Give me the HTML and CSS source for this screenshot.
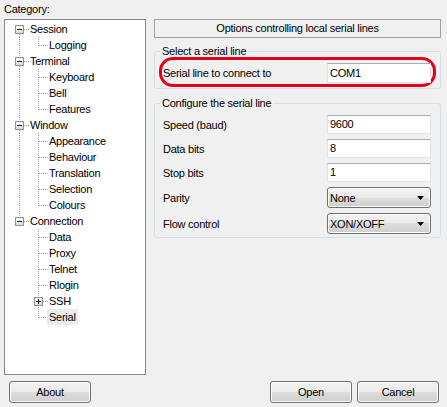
FILE: index.html
```html
<!DOCTYPE html>
<html>
<head>
<meta charset="utf-8">
<link rel="stylesheet" href="styles.css">
</head>
<body>
<div class="dialog">
  <div class="main">
    <div class="left">
      <div class="cat-label">Category:</div>
      <div class="tree">
        <div class="row l0 t-first"><span class="exp minus"></span><span class="lbl">Session</span></div>
        <div class="row l1 t-cont-last"><span class="lbl">Logging</span></div>
        <div class="row l0 t-mid"><span class="exp minus"></span><span class="lbl">Terminal</span></div>
        <div class="row l1 t-cont"><span class="lbl">Keyboard</span></div>
        <div class="row l1 t-cont"><span class="lbl">Bell</span></div>
        <div class="row l1 t-cont-last"><span class="lbl">Features</span></div>
        <div class="row l0 t-mid"><span class="exp minus"></span><span class="lbl">Window</span></div>
        <div class="row l1 t-cont"><span class="lbl">Appearance</span></div>
        <div class="row l1 t-cont"><span class="lbl">Behaviour</span></div>
        <div class="row l1 t-cont"><span class="lbl">Translation</span></div>
        <div class="row l1 t-cont"><span class="lbl">Selection</span></div>
        <div class="row l1 t-cont-last"><span class="lbl">Colours</span></div>
        <div class="row l0 t-last"><span class="exp minus"></span><span class="lbl">Connection</span></div>
        <div class="row l1 t-end"><span class="lbl">Data</span></div>
        <div class="row l1 t-end"><span class="lbl">Proxy</span></div>
        <div class="row l1 t-end"><span class="lbl">Telnet</span></div>
        <div class="row l1 t-end"><span class="lbl">Rlogin</span></div>
        <div class="row l1x t-end-exp"><span class="exp plus"></span><span class="lbl">SSH</span></div>
        <div class="row l1 t-end-last"><span class="lbl sel">Serial</span></div>
      </div>
    </div>
    <div class="right">
      <div class="panel-title">Options controlling local serial lines</div>
      <fieldset class="group g1">
        <legend>Select a serial line</legend>
        <div class="field highlight">
          <span class="flabel">Serial line to connect to</span>
          <span class="input">COM1</span>
        </div>
      </fieldset>
      <fieldset class="group g2">
        <legend>Configure the serial line</legend>
        <div class="field"><span class="flabel">Speed (baud)</span><span class="input">9600</span></div>
        <div class="field"><span class="flabel">Data bits</span><span class="input">8</span></div>
        <div class="field"><span class="flabel">Stop bits</span><span class="input">1</span></div>
        <div class="field"><span class="flabel">Parity</span><span class="select"><span class="val">None</span><svg class="arrow" width="7" height="4" viewBox="0 0 7 4"><polygon points="0,0 7,0 3.5,4" fill="#000"/></svg></span></div>
        <div class="field"><span class="flabel">Flow control</span><span class="select"><span class="val">XON/XOFF</span><svg class="arrow" width="7" height="4" viewBox="0 0 7 4"><polygon points="0,0 7,0 3.5,4" fill="#000"/></svg></span></div>
      </fieldset>
    </div>
  </div>
  <div class="buttons">
    <span class="btn">About</span>
    <span class="spacer"></span>
    <span class="btn">Open</span>
    <span class="btn">Cancel</span>
  </div>
</div>
</body>
</html>
```

FILE: styles.css
```css
html, body {
  margin: 0;
  padding: 0;
}
body {
  width: 447px;
  height: 407px;
  overflow: hidden;
  background: #f0f0f0;
  font-family: "Liberation Sans", Arial, sans-serif;
  font-size: 11px;
  letter-spacing: -0.25px;
  color: #000;
}
.dialog {
  display: flex;
  flex-direction: column;
}
.main {
  display: grid;
  grid-template-columns: 142px 287px;
  column-gap: 8px;
  padding-left: 4px;
}
.cat-label {
  line-height: 13px;
  margin: 3px 0 3px 0;
}
.tree {
  box-sizing: border-box;
  height: 356px;
  border: 1px solid #828790;
  background: #fff;
  padding-top: 1px;
  --vd: repeating-linear-gradient(to bottom, #a0a0a0 0 1px, transparent 1px 2px);
  --hd: repeating-linear-gradient(to right, #a0a0a0 0 1px, transparent 1px 2px);
}
.row {
  height: 16px;
  line-height: 16px;
  display: flex;
  align-items: flex-start;
  white-space: nowrap;
  background-repeat: no-repeat;
}
.l0 { padding-left: 10px; }
.l1 { padding-left: 42px; }
.l1x { padding-left: 29px; }
.lbl { padding: 0 2px; }
.l0 .lbl { margin-left: 4px; }
.l1x .lbl { margin-left: 4px; }
.lbl.sel { background: #ececec; }

.exp {
  box-sizing: border-box;
  width: 9px;
  height: 9px;
  margin-top: 4px;
  border: 1px solid #8f8f8f;
  background-color: #f4f4f4;
  background-repeat: no-repeat;
}
.exp.minus {
  background-image: linear-gradient(#1b1b1b, #1b1b1b), linear-gradient(#fff, #dcdcdc);
  background-size: 5px 1px, 100% 100%;
  background-position: 1px 3px, 0 0;
}
.exp.plus {
  background-image: linear-gradient(#1b1b1b, #1b1b1b), linear-gradient(#1b1b1b, #1b1b1b), linear-gradient(#fff, #dcdcdc);
  background-size: 5px 1px, 1px 5px, 100% 100%;
  background-position: 1px 3px, 3px 1px, 0 0;
}

/* tree connector lines */
.t-first {
  background-image: var(--hd), var(--vd);
  background-size: 5px 1px, 1px 3px;
  background-position: 19px 8px, 14px 13px;
}
.t-mid {
  background-image: var(--hd), var(--vd), var(--vd);
  background-size: 5px 1px, 1px 4px, 1px 3px;
  background-position: 19px 8px, 14px 0, 14px 13px;
}
.t-last {
  background-image: var(--hd), var(--vd);
  background-size: 5px 1px, 1px 4px;
  background-position: 19px 8px, 14px 0;
}
.t-cont {
  background-image: var(--vd), var(--vd), var(--hd);
  background-size: 1px 16px, 1px 16px, 9px 1px;
  background-position: 14px 0, 33px 0, 34px 8px;
}
.t-cont-last {
  background-image: var(--vd), var(--vd), var(--hd);
  background-size: 1px 16px, 1px 9px, 9px 1px;
  background-position: 14px 0, 33px 0, 34px 8px;
}
.t-end {
  background-image: var(--vd), var(--hd);
  background-size: 1px 16px, 9px 1px;
  background-position: 33px 0, 34px 8px;
}
.t-end-exp {
  background-image: var(--vd), var(--hd);
  background-size: 1px 16px, 5px 1px;
  background-position: 33px 0, 38px 8px;
}
.t-end-last {
  background-image: var(--vd), var(--hd);
  background-size: 1px 9px, 9px 1px;
  background-position: 33px 0, 34px 8px;
}

.right {
  padding-top: 19px;
  display: flex;
  flex-direction: column;
}
.panel-title {
  box-sizing: border-box;
  height: 19px;
  line-height: 17px;
  border: 1px solid #a0a0a0;
  text-align: center;
}
.group {
  margin: 0;
  border: 1px solid #d5dfe5;
  border-radius: 3px;
  min-width: 0;
}
.group legend {
  padding: 0 2px;
  line-height: 13px;
}
.g1 {
  margin-top: 7px;
  padding: 0 4px 1px 4px;
}
.g1 legend { margin-left: 1px; }
.g2 {
  margin-top: 8px;
  padding: 5px 9px 3px 8px;
  display: flex;
  flex-direction: column;
  gap: 5px;
}
.g2 legend { margin-left: -3px; }
.field {
  display: flex;
  align-items: center;
  justify-content: space-between;
}
.highlight {
  box-sizing: border-box;
  height: 30px;
  margin-top: -1px;
  border: 3px solid #e3001b;
  border-radius: 14px;
  padding: 1px 2px 0 1px;
}
.input {
  box-sizing: border-box;
  width: 104px;
  height: 19px;
  line-height: 17px;
  padding: 0 2px;
  background: #fff;
  border: 1px solid #e2e3ea;
  border-top-color: #abadb3;
}
.highlight .input { height: 20px; line-height: 18px; }
.select {
  box-sizing: border-box;
  width: 104px;
  height: 21px;
  display: flex;
  align-items: center;
  justify-content: space-between;
  padding: 0 6px 0 2px;
  border: 1px solid #707070;
  border-radius: 3px;
  background: linear-gradient(#f2f2f2 0%, #ebebeb 50%, #dddddd 50%, #cfcfcf 100%);
  box-shadow: inset 0 0 0 1px #fcfcfc;
}
.arrow { display: block; }

.buttons {
  display: flex;
  gap: 5px;
  margin-top: 6px;
  padding: 0 8px 0 9px;
}
.spacer { flex: 1; }
.btn {
  box-sizing: border-box;
  width: 82px;
  height: 22px;
  line-height: 20px;
  text-align: center;
  border: 1px solid #707070;
  border-radius: 3px;
  background: linear-gradient(#f2f2f2 0%, #ebebeb 50%, #dddddd 50%, #cfcfcf 100%);
  box-shadow: inset 0 0 0 1px #fcfcfc;
}
```
